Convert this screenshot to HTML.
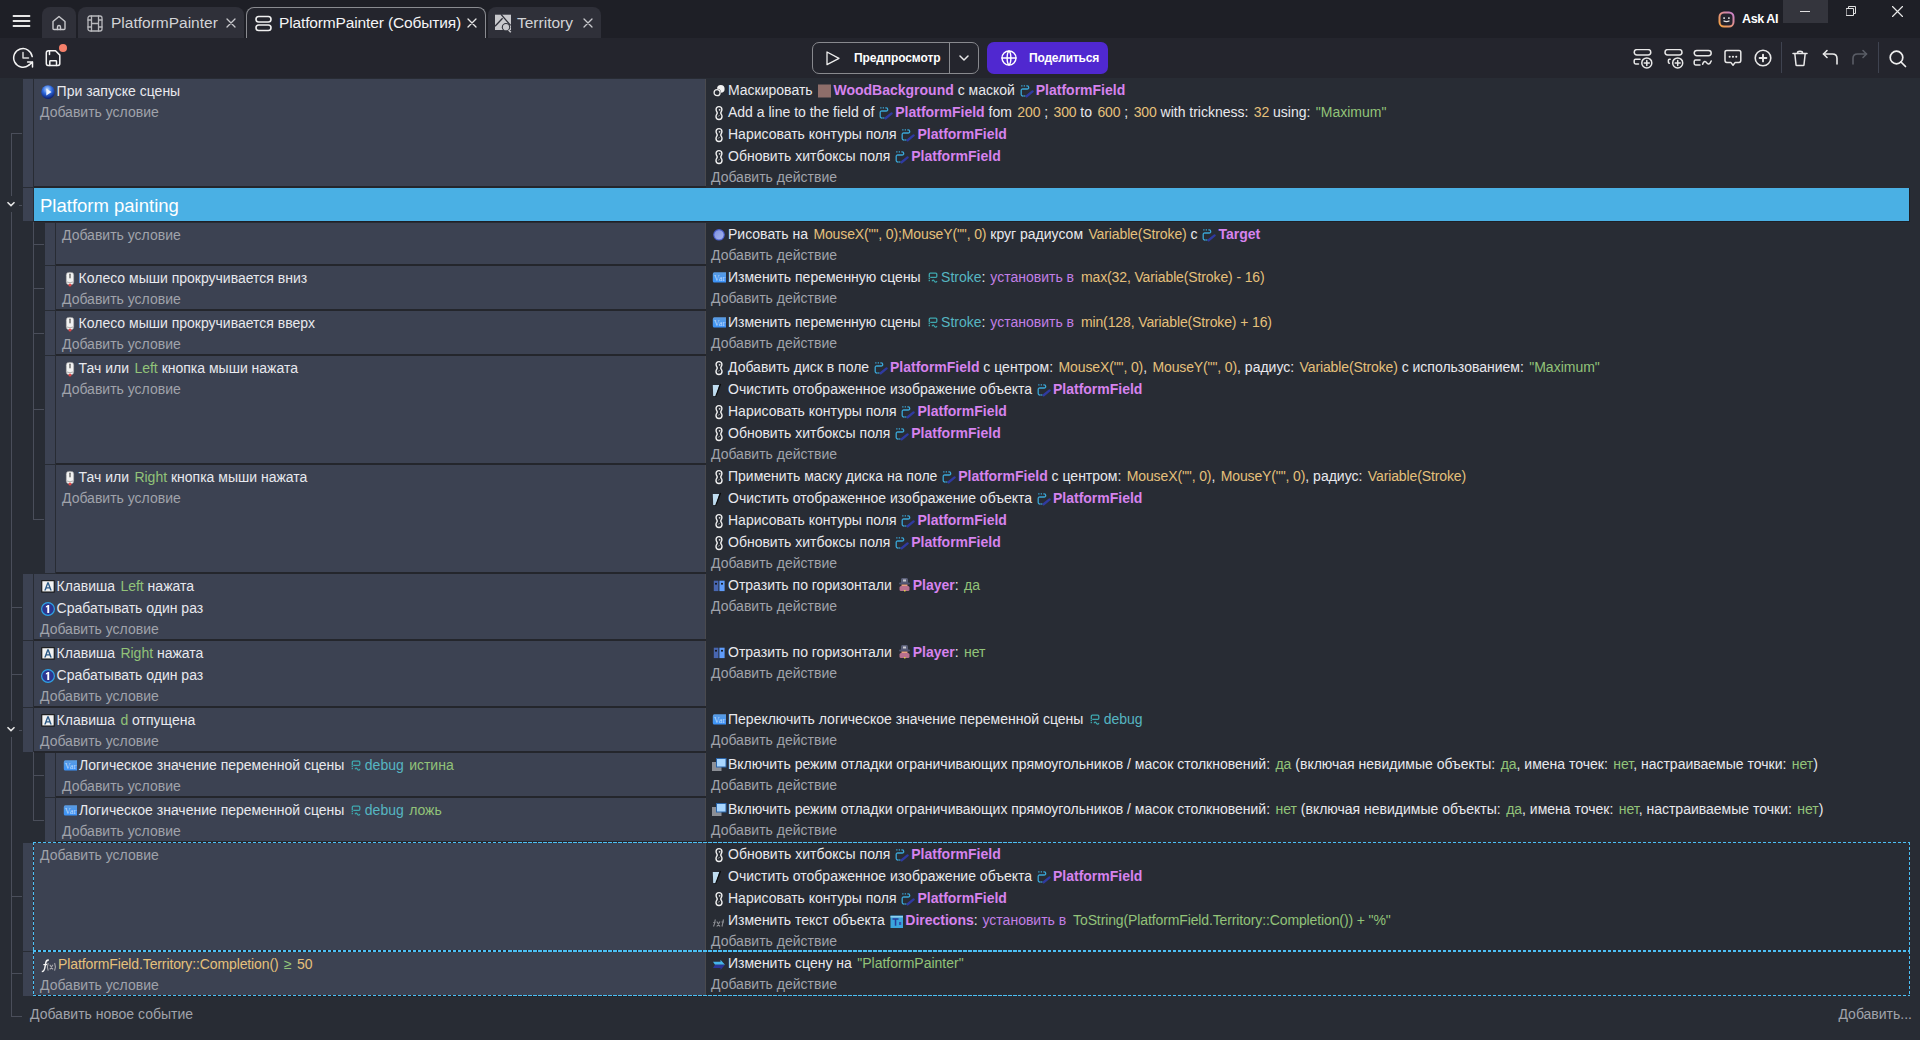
<!DOCTYPE html>
<html><head><meta charset="utf-8"><style>
*{box-sizing:border-box}
html,body{margin:0;padding:0}
body{width:1920px;height:1040px;overflow:hidden;position:relative;background:#282c34;font-family:"Liberation Sans",sans-serif;font-size:14px;color:#e8e9ee}
#tabbar{position:absolute;left:0;top:0;width:1920px;height:38px;background:#1e1f26}
#toolbar{position:absolute;left:0;top:38px;width:1920px;height:40px;background:#24252d}
.tab{position:absolute;top:7px;height:31px;background:#2f3039;border-radius:8px 8px 0 0}
.tab.act{background:#24252d;border:1px solid #8a8b90;border-bottom:none}
.tabt{position:absolute;top:13px;font-size:15.5px;line-height:20px;white-space:pre}
.btnt{position:absolute;font-weight:bold;font-size:12px;line-height:16px;color:#fff;white-space:pre}
.hd{position:absolute;width:10px;background:#3c4252}
.cd{position:absolute;background:#3c4252;border-right:1px solid #4a4a4e}
.sep{position:absolute;height:2px;background:#24262c}
.grp{position:absolute;background:#4ab0e4;border-right:1px solid #1e2026;border-bottom:1px solid #1e2026;color:#fff;font-size:18.5px}
.grp span{position:absolute;left:6px;top:8px;line-height:20px}
.ln{position:absolute;white-space:pre;line-height:22px;height:22px}
.i{display:inline-block;height:16px;vertical-align:-3px}
.ic{display:block;overflow:visible}
.tl{position:absolute;background:#4a4e5a}
.ex{color:#e5c07b;margin-left:1.5px;letter-spacing:-0.12px}
.gr{color:#92c379;margin-left:1.5px}
.gx{color:#92c379;margin-left:1.5px;letter-spacing:-0.12px}
.ob{color:#d683ee;font-weight:bold}
.vr{color:#56b6c2}
.op{color:#c27fe6;margin-left:1px;margin-right:1.5px}
.ad{color:#a0a3ab}
.dl{position:absolute}
.chev{position:absolute}
.dash{position:absolute;border:1px dashed #4cc0f5}
</style></head>
<body>
<div id="tabbar"></div><div id="toolbar"></div>
<svg style="position:absolute;left:12px;top:14px" width="20" height="14" viewBox="0 0 20 14" fill="none" stroke="#e6e6e6" stroke-width="1.8" stroke-linecap="round" stroke-linejoin="round"><path d="M1.5 2h16M1.5 7h16M1.5 12h16"/></svg>
<div class="tab" style="left:42px;width:34px"></div>
<svg style="position:absolute;left:50px;top:14px" width="18" height="18" viewBox="0 0 18 18" fill="none" stroke="#c8c8cc" stroke-width="1.4" stroke-linecap="round" stroke-linejoin="round"><path d="M3 7.5L9 2.5l6 5V14.5c0 .6-.4 1-1 1H4c-.6 0-1-.4-1-1z"/><path d="M7.5 15.5v-2.5a1.5 1.5 0 013 0v2.5"/></svg>
<div class="tab" style="left:78px;width:166px"></div>
<svg style="position:absolute;left:87px;top:15px" width="16" height="17" viewBox="0 0 16 17" fill="none" stroke="#b8b8bc" stroke-width="1.3" stroke-linecap="round" stroke-linejoin="round"><rect x="1" y="1" width="14" height="15" rx="2"/><path d="M4.5 1v15M11.5 1v15M4.5 8.5h7M1 5h3.5M1 12h3.5M11.5 5H15M11.5 12H15"/></svg>
<div class="tabt" style="left:111px;color:#d2d3d6">PlatformPainter</div>
<svg style="position:absolute;left:226px;top:18px" width="10" height="10" viewBox="0 0 10 10" fill="none" stroke="#c8c8cc" stroke-width="1.3" stroke-linecap="round" stroke-linejoin="round"><path d="M1 1l8 8M9 1L1 9"/></svg>
<div class="tab act" style="left:246px;width:240px"></div>
<svg style="position:absolute;left:255px;top:15px" width="17" height="17" viewBox="0 0 17 17" fill="none" stroke="#f0f0f0" stroke-width="1.6" stroke-linecap="round" stroke-linejoin="round"><rect x="1" y="1.5" width="15" height="5.5" rx="2.7"/><rect x="1" y="10" width="15" height="5.5" rx="2.7"/></svg>
<div class="tabt" style="left:279px;color:#f4f4f6;letter-spacing:-0.14px">PlatformPainter (События)</div>
<svg style="position:absolute;left:467px;top:18px" width="10" height="10" viewBox="0 0 10 10" fill="none" stroke="#e8e8e8" stroke-width="1.3" stroke-linecap="round" stroke-linejoin="round"><path d="M1 1l8 8M9 1L1 9"/></svg>
<div class="tab" style="left:488px;width:113px"></div>
<svg style="position:absolute;left:494px;top:14px" width="18" height="19" viewBox="0 0 18 19"><rect x="1" y="0.7" width="16" height="15.3" fill="#c8c8cc"/><path d="M1 12.3L8.6 4.2M7 0.4L16.6 11.4" stroke="#2f3039" stroke-width="1.3"/><circle cx="12" cy="13.2" r="4.2" fill="#2f3039"/><circle cx="12" cy="13.2" r="3.1" fill="#c8c8cc"/><path d="M14.6 16l2.2 2.2" stroke="#c8c8cc" stroke-width="1.6"/></svg>
<div class="tabt" style="left:517px;color:#d2d3d6">Territory</div>
<svg style="position:absolute;left:583px;top:18px" width="10" height="10" viewBox="0 0 10 10" fill="none" stroke="#c8c8cc" stroke-width="1.3" stroke-linecap="round" stroke-linejoin="round"><path d="M1 1l8 8M9 1L1 9"/></svg>
<svg style="position:absolute;left:1718px;top:11px" width="17" height="17" viewBox="0 0 17 17"><defs><linearGradient id="ga" x1="0" y1="1" x2="1" y2="0"><stop offset="0" stop-color="#f7a23a"/><stop offset="1" stop-color="#c77fd0"/></linearGradient></defs><rect x="1.5" y="1.5" width="14" height="14" rx="4.5" fill="#24232c" stroke="url(#ga)" stroke-width="2"/><rect x="5.3" y="6.3" width="1.6" height="1.6" fill="#e8e8e8"/><rect x="10.1" y="6.3" width="1.6" height="1.6" fill="#e8e8e8"/><path d="M5.5 9.8q3 1.8 6 0" stroke="#e8e8e8" stroke-width="1.2" fill="none"/></svg>
<div style="position:absolute;left:1742px;top:11px;font:bold 12.5px/16px 'Liberation Sans',sans-serif;letter-spacing:-0.4px;color:#fff">Ask AI</div>
<div style="position:absolute;left:1783px;top:0;width:45px;height:23px;background:#34353d"></div>
<svg style="position:absolute;left:1800px;top:11px" width="10" height="2" viewBox="0 0 10 2" fill="none" stroke="#e0e0e0" stroke-width="1" stroke-linecap="round" stroke-linejoin="round"><path d="M0 .5h10"/></svg>
<svg style="position:absolute;left:1846px;top:6px" width="10" height="10" viewBox="0 0 10 10" fill="none" stroke="#e0e0e0" stroke-width="1" stroke-linecap="round" stroke-linejoin="round"><path d="M2.5 2.5V.5h7v7h-2M.5 2.5h7v7h-7z"/></svg>
<svg style="position:absolute;left:1892px;top:6px" width="11" height="11" viewBox="0 0 11 11" fill="none" stroke="#e8e8e8" stroke-width="1.2" stroke-linecap="round" stroke-linejoin="round"><path d="M.5 .5l10 10M10.5 .5l-10 10"/></svg>
<svg style="position:absolute;left:12px;top:47px" width="22" height="22" viewBox="0 0 22 22" fill="none" stroke="#f4f4f4" stroke-width="1.5" stroke-linecap="round" stroke-linejoin="round"><path d="M20.2 9.6A9.3 9.3 0 1 0 16.6 18.3"/><path d="M15.6 15.1H20.5V20M16.6 18.3L20.5 15.1"/><path d="M11 5.5V11H16.5" stroke="#d8d8d8"/></svg>
<svg style="position:absolute;left:45px;top:50px" width="16" height="17" viewBox="0 0 16 17" fill="none" stroke="#f4f4f4" stroke-width="1.5" stroke-linecap="round" stroke-linejoin="round"><path d="M1.3 3Q1.3 .8 3.5 .8H10.5L14.8 5.1V13.6Q14.8 15.5 13 15.5H3Q1.3 15.5 1.3 13.6Z"/><path d="M4.5 .8V4.5"/><path d="M4.8 15.5V11.5Q4.8 10.8 5.5 10.8H10.8Q11.5 10.8 11.5 11.5V15.5"/></svg>
<div style="position:absolute;left:59px;top:44px;width:8px;height:8px;border-radius:50%;background:#f5806a"></div>
<div style="position:absolute;left:812px;top:42px;width:167px;height:32px;border:1px solid #88898e;border-radius:7px"></div>
<div style="position:absolute;left:949px;top:43px;width:1px;height:30px;background:#88898e"></div>
<svg style="position:absolute;left:826px;top:51px" width="15" height="15" viewBox="0 0 15 15" fill="none" stroke="#eeeeee" stroke-width="1.3" stroke-linecap="round" stroke-linejoin="round"><path d="M1 1l12 6.3L1 13.6z"/></svg>
<div class="btnt" style="left:854px;top:50px;letter-spacing:-0.1px">Предпросмотр</div>
<svg style="position:absolute;left:959px;top:55px" width="10" height="7" viewBox="0 0 10 7" fill="none" stroke="#e8e8e8" stroke-width="1.5" stroke-linecap="round" stroke-linejoin="round"><path d="M1 1l4 4 4-4"/></svg>
<div style="position:absolute;left:987px;top:42px;width:121px;height:32px;border-radius:7px;background:#5028d0"></div>
<svg style="position:absolute;left:1001px;top:50px" width="16" height="16" viewBox="0 0 16 16" fill="none" stroke="#ffffff" stroke-width="1.4" stroke-linecap="round" stroke-linejoin="round"><circle cx="8" cy="8" r="7"/><path d="M1 8h14M8 1c-2.5 2-2.5 12 0 14M8 1c2.5 2 2.5 12 0 14"/></svg>
<div class="btnt" style="left:1029px;top:50px;letter-spacing:-0.2px">Поделиться</div>
<svg style="position:absolute;left:1633px;top:49px" width="20" height="20" viewBox="0 0 20 20" fill="none" stroke="#e8e8e8" stroke-width="1.5" stroke-linecap="round" stroke-linejoin="round"><rect x="1.2" y="0.6" width="16.6" height="5.4" rx="2.7"/><path d="M7 10.2H2.6Q1.2 10.2 1.2 11.6V13.6Q1.2 15 2.6 15H5.5"/><circle cx="13.8" cy="13.9" r="5"/><path d="M13.8 11.4v5M11.3 13.9h5"/></svg>
<svg style="position:absolute;left:1664px;top:49px" width="20" height="20" viewBox="0 0 20 20" fill="none" stroke="#e8e8e8" stroke-width="1.5" stroke-linecap="round" stroke-linejoin="round"><rect x="1" y="0.6" width="17" height="5.4" rx="2.7"/><path d="M6.2 10.3H5.4Q4.4 10.3 4.4 11.3V13.3Q4.4 14.3 5.4 14.3"/><circle cx="13.7" cy="13.9" r="5"/><path d="M13.7 11.4v5M11.2 13.9h5"/></svg>
<svg style="position:absolute;left:1693px;top:49px" width="20" height="20" viewBox="0 0 20 20" fill="none" stroke="#e8e8e8" stroke-width="1.5" stroke-linecap="round" stroke-linejoin="round"><rect x="1.2" y="1.4" width="17" height="5.4" rx="2.7"/><path d="M7 11H2.6Q1.2 11 1.2 12.4V14.6Q1.2 16 2.6 16H7"/><path d="M9.6 15.2C10.6 11.8 12.6 11.8 13.6 13.6S16.8 16 18.2 12"/></svg>
<svg style="position:absolute;left:1724px;top:49px" width="18" height="18" viewBox="0 0 18 18" fill="none" stroke="#e8e8e8" stroke-width="1.5" stroke-linecap="round" stroke-linejoin="round"><path d="M2.8 1.4H15Q16.8 1.4 16.8 3.2V11.6Q16.8 13.4 15 13.4H11.2L9 16.2 6.8 13.4H2.8Q1 13.4 1 11.6V3.2Q1 1.4 2.8 1.4Z"/><path d="M5.6 7.8h.1M8.9 7.8h.1M12.2 7.8h.1" stroke-width="2"/></svg>
<svg style="position:absolute;left:1754px;top:49px" width="18" height="18" viewBox="0 0 18 18" fill="none" stroke="#e8e8e8" stroke-width="1.6" stroke-linecap="round" stroke-linejoin="round"><circle cx="9" cy="9" r="7.8"/><path d="M9 5.6v6.8M5.6 9h6.8" stroke-width="1.9"/></svg>
<div style="position:absolute;left:1781px;top:42px;width:1px;height:31px;background:#3f4350"></div>
<svg style="position:absolute;left:1792px;top:50px" width="16" height="17" viewBox="0 0 16 17" fill="none" stroke="#e8e8e8" stroke-width="1.5" stroke-linecap="round" stroke-linejoin="round"><path d="M1 3.5h14M5.5 3.5V2.8c0-1 .9-1.6 2.5-1.6s2.5.6 2.5 1.6v.7M2.8 3.5l1.2 11.2c0 .5.4.8.9.8h6.2c.5 0 .9-.3.9-.8l1.2-11.2"/></svg>
<svg style="position:absolute;left:1822px;top:49px" width="17" height="17" viewBox="0 0 17 17" fill="none" stroke="#e8e8e8" stroke-width="1.6" stroke-linecap="round" stroke-linejoin="round"><path d="M5 1.5L1.5 5 5 8.5"/><path d="M1.5 5h9c2.8 0 4.5 2 4.5 4.5V15"/></svg>
<svg style="position:absolute;left:1851px;top:49px" width="17" height="17" viewBox="0 0 17 17" fill="none" stroke="#5a5d66" stroke-width="1.6" stroke-linecap="round" stroke-linejoin="round"><path d="M12 1.5L15.5 5 12 8.5"/><path d="M15.5 5h-9C3.7 5 2 7 2 9.5V15"/></svg>
<div style="position:absolute;left:1878px;top:42px;width:1px;height:31px;background:#3f4350"></div>
<svg style="position:absolute;left:1889px;top:50px" width="18" height="18" viewBox="0 0 18 18" fill="none" stroke="#eeeeee" stroke-width="1.7" stroke-linecap="round" stroke-linejoin="round"><circle cx="7.5" cy="7.5" r="6.3"/><path d="M12 12l4.5 4.5"/></svg>
<div class="hd" style="left:23px;top:79px;height:108px"></div>
<div class="cd" style="left:34px;top:79px;width:672px;height:107px"></div>
<div class="sep" style="left:34px;top:186px;width:672px"></div>
<div class="ln" style="left:41px;top:80px"><span class="i" style="width:15.6px;margin-right:0px"><svg class="ic" width="15.6" height="16" viewBox="0 0 15.6 16" ><defs><radialGradient id="gp" cx="45%" cy="30%" r="75%"><stop offset="0" stop-color="#b8d8ff"/><stop offset="0.45" stop-color="#2f6ae0"/><stop offset="1" stop-color="#06125a"/></radialGradient></defs><circle cx="7" cy="9.1" r="6.8" fill="url(#gp)"/><path d="M5.3 5.6 L10.6 9.1 L5.3 12.6Z" fill="#eef2fa"/></svg></span>При запуске сцены</div>
<div class="ln" style="left:40px;top:101px"><span class="ad">Добавить условие</span></div>
<div class="ln" style="left:712px;top:79px"><span class="i" style="width:16px;margin-right:0px"><svg class="ic" width="16" height="16" viewBox="0 0 16 16" ><circle cx="8.8" cy="6.9" r="3.8" fill="#f4f4f4"/><circle cx="5.1" cy="10.7" r="3.9" fill="#282c34"/><circle cx="5.1" cy="10.7" r="3" fill="none" stroke="#eeeeee" stroke-width="1.3"/></svg></span>Маскировать <span class="i" style="width:13px;margin:0 2.5px 0 1.5px"><svg class="ic" width="13" height="16" viewBox="0 0 13 16" ><rect x="0" y="2.5" width="13" height="13" fill="#8e6e6a"/></svg></span><span class="ob">WoodBackground</span> с маской <span class="i" style="width:14px;margin:0 2px 0 1px"><svg class="ic" width="14" height="16" viewBox="0 0 14 16" ><path d="M1.2 3.9H6.5" fill="none" stroke="#3aa6d6" stroke-width="1.3" stroke-dasharray="1.3 1.2"/><path d="M6.5 3.9h.7Q8.7 3.9 8.7 5.4 8.7 7 7.2 7H2.7Q1.2 7 1.2 8.5V12.5Q1.2 14 2.7 14H3.6" fill="none" stroke="#3aa6d6" stroke-width="1.3"/><path d="M4.2 14h1.2" stroke="#3aa6d6" stroke-width="1.3"/><path d="M6.6 14.2L12.6 9.4" stroke="#2f3aa0" stroke-width="2.4" stroke-linecap="round"/></svg></span><span class="ob">PlatformField</span></div>
<div class="ln" style="left:712px;top:101px"><span class="i" style="width:16px;margin-right:0px"><svg class="ic" width="16" height="16" viewBox="0 0 16 16" ><path d="M7 2.6C5 2.6 4.1 3.9 4.1 5.6c0 1.3.6 2 1 2.8.2.4.2.8 0 1.2-.4.8-1.1 1.5-1.1 2.9 0 1.8 1 3 3 3s3-1.2 3-3c0-1.4-.7-2.1-1.1-2.9-.2-.4-.2-.8 0-1.2.4-.8 1-1.5 1-2.8 0-1.7-.9-3-2.9-3z" fill="none" stroke="#f0f0f0" stroke-width="1.4"/><circle cx="7.6" cy="5.8" r=".9" fill="#e0e0e0"/><path d="M6.2 12.6l1.4-1.6" stroke="#b0b0b0" stroke-width=".9"/></svg></span>Add a line to the field of <span class="i" style="width:14px;margin:0 2px 0 1px"><svg class="ic" width="14" height="16" viewBox="0 0 14 16" ><path d="M1.2 3.9H6.5" fill="none" stroke="#3aa6d6" stroke-width="1.3" stroke-dasharray="1.3 1.2"/><path d="M6.5 3.9h.7Q8.7 3.9 8.7 5.4 8.7 7 7.2 7H2.7Q1.2 7 1.2 8.5V12.5Q1.2 14 2.7 14H3.6" fill="none" stroke="#3aa6d6" stroke-width="1.3"/><path d="M4.2 14h1.2" stroke="#3aa6d6" stroke-width="1.3"/><path d="M6.6 14.2L12.6 9.4" stroke="#2f3aa0" stroke-width="2.4" stroke-linecap="round"/></svg></span><span class="ob">PlatformField</span> fom <span class="ex">200</span> ; <span class="ex">300</span> to <span class="ex">600</span> ; <span class="ex">300</span> with trickness: <span class="ex">32</span> using: <span class="gr">&quot;Maximum&quot;</span></div>
<div class="ln" style="left:712px;top:123px"><span class="i" style="width:16px;margin-right:0px"><svg class="ic" width="16" height="16" viewBox="0 0 16 16" ><path d="M7 2.6C5 2.6 4.1 3.9 4.1 5.6c0 1.3.6 2 1 2.8.2.4.2.8 0 1.2-.4.8-1.1 1.5-1.1 2.9 0 1.8 1 3 3 3s3-1.2 3-3c0-1.4-.7-2.1-1.1-2.9-.2-.4-.2-.8 0-1.2.4-.8 1-1.5 1-2.8 0-1.7-.9-3-2.9-3z" fill="none" stroke="#f0f0f0" stroke-width="1.4"/><circle cx="7.6" cy="5.8" r=".9" fill="#e0e0e0"/><path d="M6.2 12.6l1.4-1.6" stroke="#b0b0b0" stroke-width=".9"/></svg></span>Нарисовать контуры поля <span class="i" style="width:14px;margin:0 2px 0 1px"><svg class="ic" width="14" height="16" viewBox="0 0 14 16" ><path d="M1.2 3.9H6.5" fill="none" stroke="#3aa6d6" stroke-width="1.3" stroke-dasharray="1.3 1.2"/><path d="M6.5 3.9h.7Q8.7 3.9 8.7 5.4 8.7 7 7.2 7H2.7Q1.2 7 1.2 8.5V12.5Q1.2 14 2.7 14H3.6" fill="none" stroke="#3aa6d6" stroke-width="1.3"/><path d="M4.2 14h1.2" stroke="#3aa6d6" stroke-width="1.3"/><path d="M6.6 14.2L12.6 9.4" stroke="#2f3aa0" stroke-width="2.4" stroke-linecap="round"/></svg></span><span class="ob">PlatformField</span></div>
<div class="ln" style="left:712px;top:145px"><span class="i" style="width:16px;margin-right:0px"><svg class="ic" width="16" height="16" viewBox="0 0 16 16" ><path d="M7 2.6C5 2.6 4.1 3.9 4.1 5.6c0 1.3.6 2 1 2.8.2.4.2.8 0 1.2-.4.8-1.1 1.5-1.1 2.9 0 1.8 1 3 3 3s3-1.2 3-3c0-1.4-.7-2.1-1.1-2.9-.2-.4-.2-.8 0-1.2.4-.8 1-1.5 1-2.8 0-1.7-.9-3-2.9-3z" fill="none" stroke="#f0f0f0" stroke-width="1.4"/><circle cx="7.6" cy="5.8" r=".9" fill="#e0e0e0"/><path d="M6.2 12.6l1.4-1.6" stroke="#b0b0b0" stroke-width=".9"/></svg></span>Обновить хитбоксы поля <span class="i" style="width:14px;margin:0 2px 0 1px"><svg class="ic" width="14" height="16" viewBox="0 0 14 16" ><path d="M1.2 3.9H6.5" fill="none" stroke="#3aa6d6" stroke-width="1.3" stroke-dasharray="1.3 1.2"/><path d="M6.5 3.9h.7Q8.7 3.9 8.7 5.4 8.7 7 7.2 7H2.7Q1.2 7 1.2 8.5V12.5Q1.2 14 2.7 14H3.6" fill="none" stroke="#3aa6d6" stroke-width="1.3"/><path d="M4.2 14h1.2" stroke="#3aa6d6" stroke-width="1.3"/><path d="M6.6 14.2L12.6 9.4" stroke="#2f3aa0" stroke-width="2.4" stroke-linecap="round"/></svg></span><span class="ob">PlatformField</span></div>
<div class="ln" style="left:711px;top:166px"><span class="ad">Добавить действие</span></div>
<div class="hd" style="left:23px;top:188px;height:33px"></div>
<div class="grp" style="left:34px;top:188px;width:1876px;height:34px"><span>Platform painting</span></div>
<div class="hd" style="left:45px;top:223px;height:42px"></div>
<div class="cd" style="left:56px;top:223px;width:650px;height:41px"></div>
<div class="sep" style="left:56px;top:264px;width:650px"></div>
<div class="ln" style="left:62px;top:224px"><span class="ad">Добавить условие</span></div>
<div class="ln" style="left:712px;top:223px"><span class="i" style="width:16px;margin-right:0px"><svg class="ic" width="16" height="16" viewBox="0 0 16 16" ><defs><linearGradient id="gc" x1="0" y1="0" x2="1" y2="1"><stop offset="0" stop-color="#7d90e0"/><stop offset="1" stop-color="#a8b6ee"/></linearGradient></defs><circle cx="7" cy="8.85" r="5.2" fill="url(#gc)" stroke="#4d62d4" stroke-width="1.1"/></svg></span>Рисовать на <span class="ex">MouseX(&quot;&quot;, 0);MouseY(&quot;&quot;, 0)</span> круг радиусом <span class="ex">Variable(Stroke)</span> с <span class="i" style="width:14px;margin:0 2px 0 1px"><svg class="ic" width="14" height="16" viewBox="0 0 14 16" ><path d="M1.2 3.9H6.5" fill="none" stroke="#3aa6d6" stroke-width="1.3" stroke-dasharray="1.3 1.2"/><path d="M6.5 3.9h.7Q8.7 3.9 8.7 5.4 8.7 7 7.2 7H2.7Q1.2 7 1.2 8.5V12.5Q1.2 14 2.7 14H3.6" fill="none" stroke="#3aa6d6" stroke-width="1.3"/><path d="M4.2 14h1.2" stroke="#3aa6d6" stroke-width="1.3"/><path d="M6.6 14.2L12.6 9.4" stroke="#2f3aa0" stroke-width="2.4" stroke-linecap="round"/></svg></span><span class="ob">Target</span></div>
<div class="ln" style="left:711px;top:244px"><span class="ad">Добавить действие</span></div>
<div class="hd" style="left:45px;top:266px;height:44px"></div>
<div class="cd" style="left:56px;top:266px;width:650px;height:43px"></div>
<div class="sep" style="left:56px;top:309px;width:650px"></div>
<div class="ln" style="left:63px;top:267px"><span class="i" style="width:15.6px;margin-right:0px"><svg class="ic" width="15.6" height="16" viewBox="0 0 15.6 16" ><path d="M3.2 5.2C3.2 3 4.4 2.3 7 2.3s3.8.7 3.8 2.9v6.3c0 2.6-1.4 3.4-3.8 3.4s-3.8-.8-3.8-3.4z" fill="#f2f2f2" stroke="#888" stroke-width=".5"/><path d="M7 4.3v3.5" stroke="#666" stroke-width="1.4" stroke-linecap="round"/><path d="M4 12q3 1.5 6 0" stroke="#999" stroke-width=".8" fill="none"/><circle cx="7" cy="15" r="1.5" fill="#e04848"/></svg></span>Колесо мыши прокручивается вниз</div>
<div class="ln" style="left:62px;top:288px"><span class="ad">Добавить условие</span></div>
<div class="ln" style="left:712px;top:266px"><span class="i" style="width:16px;margin-right:0px"><svg class="ic" width="16" height="16" viewBox="0 0 16 16" ><defs><linearGradient id="gv" x1="0" y1="0" x2="0" y2="1"><stop offset="0" stop-color="#5b9be0"/><stop offset="1" stop-color="#3a92fa"/></linearGradient></defs><path d="M2.3 3.3H14V13.6H2.3Q.8 13.6 .8 12V5Q.8 3.3 2.3 3.3z" fill="url(#gv)"/><text x="7.5" y="12.2" font-family="Liberation Serif" font-size="8.2" fill="#bcd9ff" text-anchor="middle">Var</text></svg></span>Изменить переменную сцены <span class="i" style="width:10px;margin:0 3.5px 0 3px"><svg class="ic" width="10" height="16" viewBox="0 0 10 16" ><path d="M1.3 8.6V5.2Q1.3 4.2 2.3 4.2H7.8Q8.8 4.2 8.8 5.2V7.3Q8.8 8.3 7.8 8.3H2.3" fill="none" stroke="#3ea7ae" stroke-width="1.3"/><path d="M1.3 9v3.6" stroke="#3ea7ae" stroke-width="1.3" stroke-dasharray="1.2 .8"/><path d="M4 12.2q1.2-2 2.4 0t2.6 0" fill="none" stroke="#3ea7ae" stroke-width="1.2"/></svg></span><span class="vr">Stroke</span>: <span class="op">установить в</span> <span class="ex">max(32, Variable(Stroke) - 16)</span></div>
<div class="ln" style="left:711px;top:287px"><span class="ad">Добавить действие</span></div>
<div class="hd" style="left:45px;top:311px;height:44px"></div>
<div class="cd" style="left:56px;top:311px;width:650px;height:43px"></div>
<div class="sep" style="left:56px;top:354px;width:650px"></div>
<div class="ln" style="left:63px;top:312px"><span class="i" style="width:15.6px;margin-right:0px"><svg class="ic" width="15.6" height="16" viewBox="0 0 15.6 16" ><path d="M3.2 5.2C3.2 3 4.4 2.3 7 2.3s3.8.7 3.8 2.9v6.3c0 2.6-1.4 3.4-3.8 3.4s-3.8-.8-3.8-3.4z" fill="#f2f2f2" stroke="#888" stroke-width=".5"/><path d="M7 4.3v3.5" stroke="#666" stroke-width="1.4" stroke-linecap="round"/><path d="M4 12q3 1.5 6 0" stroke="#999" stroke-width=".8" fill="none"/><circle cx="7" cy="15" r="1.5" fill="#e04848"/></svg></span>Колесо мыши прокручивается вверх</div>
<div class="ln" style="left:62px;top:333px"><span class="ad">Добавить условие</span></div>
<div class="ln" style="left:712px;top:311px"><span class="i" style="width:16px;margin-right:0px"><svg class="ic" width="16" height="16" viewBox="0 0 16 16" ><defs><linearGradient id="gv" x1="0" y1="0" x2="0" y2="1"><stop offset="0" stop-color="#5b9be0"/><stop offset="1" stop-color="#3a92fa"/></linearGradient></defs><path d="M2.3 3.3H14V13.6H2.3Q.8 13.6 .8 12V5Q.8 3.3 2.3 3.3z" fill="url(#gv)"/><text x="7.5" y="12.2" font-family="Liberation Serif" font-size="8.2" fill="#bcd9ff" text-anchor="middle">Var</text></svg></span>Изменить переменную сцены <span class="i" style="width:10px;margin:0 3.5px 0 3px"><svg class="ic" width="10" height="16" viewBox="0 0 10 16" ><path d="M1.3 8.6V5.2Q1.3 4.2 2.3 4.2H7.8Q8.8 4.2 8.8 5.2V7.3Q8.8 8.3 7.8 8.3H2.3" fill="none" stroke="#3ea7ae" stroke-width="1.3"/><path d="M1.3 9v3.6" stroke="#3ea7ae" stroke-width="1.3" stroke-dasharray="1.2 .8"/><path d="M4 12.2q1.2-2 2.4 0t2.6 0" fill="none" stroke="#3ea7ae" stroke-width="1.2"/></svg></span><span class="vr">Stroke</span>: <span class="op">установить в</span> <span class="ex">min(128, Variable(Stroke) + 16)</span></div>
<div class="ln" style="left:711px;top:332px"><span class="ad">Добавить действие</span></div>
<div class="hd" style="left:45px;top:356px;height:108px"></div>
<div class="cd" style="left:56px;top:356px;width:650px;height:107px"></div>
<div class="sep" style="left:56px;top:463px;width:650px"></div>
<div class="ln" style="left:63px;top:357px"><span class="i" style="width:15.6px;margin-right:0px"><svg class="ic" width="15.6" height="16" viewBox="0 0 15.6 16" ><path d="M3.2 5.2C3.2 3 4.4 2.3 7 2.3s3.8.7 3.8 2.9v6.3c0 2.6-1.4 3.4-3.8 3.4s-3.8-.8-3.8-3.4z" fill="#f2f2f2" stroke="#888" stroke-width=".5"/><path d="M7 4.3v3.5" stroke="#666" stroke-width="1.4" stroke-linecap="round"/><path d="M4 12q3 1.5 6 0" stroke="#999" stroke-width=".8" fill="none"/><circle cx="7" cy="15" r="1.5" fill="#e04848"/></svg></span>Тач или <span class="gr">Left</span> кнопка мыши нажата</div>
<div class="ln" style="left:62px;top:378px"><span class="ad">Добавить условие</span></div>
<div class="ln" style="left:712px;top:356px"><span class="i" style="width:16px;margin-right:0px"><svg class="ic" width="16" height="16" viewBox="0 0 16 16" ><path d="M7 2.6C5 2.6 4.1 3.9 4.1 5.6c0 1.3.6 2 1 2.8.2.4.2.8 0 1.2-.4.8-1.1 1.5-1.1 2.9 0 1.8 1 3 3 3s3-1.2 3-3c0-1.4-.7-2.1-1.1-2.9-.2-.4-.2-.8 0-1.2.4-.8 1-1.5 1-2.8 0-1.7-.9-3-2.9-3z" fill="none" stroke="#f0f0f0" stroke-width="1.4"/><circle cx="7.6" cy="5.8" r=".9" fill="#e0e0e0"/><path d="M6.2 12.6l1.4-1.6" stroke="#b0b0b0" stroke-width=".9"/></svg></span>Добавить диск в поле <span class="i" style="width:14px;margin:0 2px 0 1px"><svg class="ic" width="14" height="16" viewBox="0 0 14 16" ><path d="M1.2 3.9H6.5" fill="none" stroke="#3aa6d6" stroke-width="1.3" stroke-dasharray="1.3 1.2"/><path d="M6.5 3.9h.7Q8.7 3.9 8.7 5.4 8.7 7 7.2 7H2.7Q1.2 7 1.2 8.5V12.5Q1.2 14 2.7 14H3.6" fill="none" stroke="#3aa6d6" stroke-width="1.3"/><path d="M4.2 14h1.2" stroke="#3aa6d6" stroke-width="1.3"/><path d="M6.6 14.2L12.6 9.4" stroke="#2f3aa0" stroke-width="2.4" stroke-linecap="round"/></svg></span><span class="ob">PlatformField</span> с центром: <span class="ex">MouseX(&quot;&quot;, 0)</span>, <span class="ex">MouseY(&quot;&quot;, 0)</span>, радиус: <span class="ex">Variable(Stroke)</span> с использованием: <span class="gr">&quot;Maximum&quot;</span></div>
<div class="ln" style="left:712px;top:378px"><span class="i" style="width:16px;margin-right:0px"><svg class="ic" width="16" height="16" viewBox="0 0 16 16" ><path d="M.8 4h6.4L4 15H1.2z" fill="#bfdcf0"/><path d="M8.6 3L3.6 15.6" stroke="#0a0a0a" stroke-width="1.2"/></svg></span>Очистить отображенное изображение объекта <span class="i" style="width:14px;margin:0 2px 0 1px"><svg class="ic" width="14" height="16" viewBox="0 0 14 16" ><path d="M1.2 3.9H6.5" fill="none" stroke="#3aa6d6" stroke-width="1.3" stroke-dasharray="1.3 1.2"/><path d="M6.5 3.9h.7Q8.7 3.9 8.7 5.4 8.7 7 7.2 7H2.7Q1.2 7 1.2 8.5V12.5Q1.2 14 2.7 14H3.6" fill="none" stroke="#3aa6d6" stroke-width="1.3"/><path d="M4.2 14h1.2" stroke="#3aa6d6" stroke-width="1.3"/><path d="M6.6 14.2L12.6 9.4" stroke="#2f3aa0" stroke-width="2.4" stroke-linecap="round"/></svg></span><span class="ob">PlatformField</span></div>
<div class="ln" style="left:712px;top:400px"><span class="i" style="width:16px;margin-right:0px"><svg class="ic" width="16" height="16" viewBox="0 0 16 16" ><path d="M7 2.6C5 2.6 4.1 3.9 4.1 5.6c0 1.3.6 2 1 2.8.2.4.2.8 0 1.2-.4.8-1.1 1.5-1.1 2.9 0 1.8 1 3 3 3s3-1.2 3-3c0-1.4-.7-2.1-1.1-2.9-.2-.4-.2-.8 0-1.2.4-.8 1-1.5 1-2.8 0-1.7-.9-3-2.9-3z" fill="none" stroke="#f0f0f0" stroke-width="1.4"/><circle cx="7.6" cy="5.8" r=".9" fill="#e0e0e0"/><path d="M6.2 12.6l1.4-1.6" stroke="#b0b0b0" stroke-width=".9"/></svg></span>Нарисовать контуры поля <span class="i" style="width:14px;margin:0 2px 0 1px"><svg class="ic" width="14" height="16" viewBox="0 0 14 16" ><path d="M1.2 3.9H6.5" fill="none" stroke="#3aa6d6" stroke-width="1.3" stroke-dasharray="1.3 1.2"/><path d="M6.5 3.9h.7Q8.7 3.9 8.7 5.4 8.7 7 7.2 7H2.7Q1.2 7 1.2 8.5V12.5Q1.2 14 2.7 14H3.6" fill="none" stroke="#3aa6d6" stroke-width="1.3"/><path d="M4.2 14h1.2" stroke="#3aa6d6" stroke-width="1.3"/><path d="M6.6 14.2L12.6 9.4" stroke="#2f3aa0" stroke-width="2.4" stroke-linecap="round"/></svg></span><span class="ob">PlatformField</span></div>
<div class="ln" style="left:712px;top:422px"><span class="i" style="width:16px;margin-right:0px"><svg class="ic" width="16" height="16" viewBox="0 0 16 16" ><path d="M7 2.6C5 2.6 4.1 3.9 4.1 5.6c0 1.3.6 2 1 2.8.2.4.2.8 0 1.2-.4.8-1.1 1.5-1.1 2.9 0 1.8 1 3 3 3s3-1.2 3-3c0-1.4-.7-2.1-1.1-2.9-.2-.4-.2-.8 0-1.2.4-.8 1-1.5 1-2.8 0-1.7-.9-3-2.9-3z" fill="none" stroke="#f0f0f0" stroke-width="1.4"/><circle cx="7.6" cy="5.8" r=".9" fill="#e0e0e0"/><path d="M6.2 12.6l1.4-1.6" stroke="#b0b0b0" stroke-width=".9"/></svg></span>Обновить хитбоксы поля <span class="i" style="width:14px;margin:0 2px 0 1px"><svg class="ic" width="14" height="16" viewBox="0 0 14 16" ><path d="M1.2 3.9H6.5" fill="none" stroke="#3aa6d6" stroke-width="1.3" stroke-dasharray="1.3 1.2"/><path d="M6.5 3.9h.7Q8.7 3.9 8.7 5.4 8.7 7 7.2 7H2.7Q1.2 7 1.2 8.5V12.5Q1.2 14 2.7 14H3.6" fill="none" stroke="#3aa6d6" stroke-width="1.3"/><path d="M4.2 14h1.2" stroke="#3aa6d6" stroke-width="1.3"/><path d="M6.6 14.2L12.6 9.4" stroke="#2f3aa0" stroke-width="2.4" stroke-linecap="round"/></svg></span><span class="ob">PlatformField</span></div>
<div class="ln" style="left:711px;top:443px"><span class="ad">Добавить действие</span></div>
<div class="hd" style="left:45px;top:465px;height:108px"></div>
<div class="cd" style="left:56px;top:465px;width:650px;height:107px"></div>
<div class="sep" style="left:56px;top:572px;width:650px"></div>
<div class="ln" style="left:63px;top:466px"><span class="i" style="width:15.6px;margin-right:0px"><svg class="ic" width="15.6" height="16" viewBox="0 0 15.6 16" ><path d="M3.2 5.2C3.2 3 4.4 2.3 7 2.3s3.8.7 3.8 2.9v6.3c0 2.6-1.4 3.4-3.8 3.4s-3.8-.8-3.8-3.4z" fill="#f2f2f2" stroke="#888" stroke-width=".5"/><path d="M7 4.3v3.5" stroke="#666" stroke-width="1.4" stroke-linecap="round"/><path d="M4 12q3 1.5 6 0" stroke="#999" stroke-width=".8" fill="none"/><circle cx="7" cy="15" r="1.5" fill="#e04848"/></svg></span>Тач или <span class="gr">Right</span> кнопка мыши нажата</div>
<div class="ln" style="left:62px;top:487px"><span class="ad">Добавить условие</span></div>
<div class="ln" style="left:712px;top:465px"><span class="i" style="width:16px;margin-right:0px"><svg class="ic" width="16" height="16" viewBox="0 0 16 16" ><path d="M7 2.6C5 2.6 4.1 3.9 4.1 5.6c0 1.3.6 2 1 2.8.2.4.2.8 0 1.2-.4.8-1.1 1.5-1.1 2.9 0 1.8 1 3 3 3s3-1.2 3-3c0-1.4-.7-2.1-1.1-2.9-.2-.4-.2-.8 0-1.2.4-.8 1-1.5 1-2.8 0-1.7-.9-3-2.9-3z" fill="none" stroke="#f0f0f0" stroke-width="1.4"/><circle cx="7.6" cy="5.8" r=".9" fill="#e0e0e0"/><path d="M6.2 12.6l1.4-1.6" stroke="#b0b0b0" stroke-width=".9"/></svg></span>Применить маску диска на поле <span class="i" style="width:14px;margin:0 2px 0 1px"><svg class="ic" width="14" height="16" viewBox="0 0 14 16" ><path d="M1.2 3.9H6.5" fill="none" stroke="#3aa6d6" stroke-width="1.3" stroke-dasharray="1.3 1.2"/><path d="M6.5 3.9h.7Q8.7 3.9 8.7 5.4 8.7 7 7.2 7H2.7Q1.2 7 1.2 8.5V12.5Q1.2 14 2.7 14H3.6" fill="none" stroke="#3aa6d6" stroke-width="1.3"/><path d="M4.2 14h1.2" stroke="#3aa6d6" stroke-width="1.3"/><path d="M6.6 14.2L12.6 9.4" stroke="#2f3aa0" stroke-width="2.4" stroke-linecap="round"/></svg></span><span class="ob">PlatformField</span> с центром: <span class="ex">MouseX(&quot;&quot;, 0)</span>, <span class="ex">MouseY(&quot;&quot;, 0)</span>, радиус: <span class="ex">Variable(Stroke)</span></div>
<div class="ln" style="left:712px;top:487px"><span class="i" style="width:16px;margin-right:0px"><svg class="ic" width="16" height="16" viewBox="0 0 16 16" ><path d="M.8 4h6.4L4 15H1.2z" fill="#bfdcf0"/><path d="M8.6 3L3.6 15.6" stroke="#0a0a0a" stroke-width="1.2"/></svg></span>Очистить отображенное изображение объекта <span class="i" style="width:14px;margin:0 2px 0 1px"><svg class="ic" width="14" height="16" viewBox="0 0 14 16" ><path d="M1.2 3.9H6.5" fill="none" stroke="#3aa6d6" stroke-width="1.3" stroke-dasharray="1.3 1.2"/><path d="M6.5 3.9h.7Q8.7 3.9 8.7 5.4 8.7 7 7.2 7H2.7Q1.2 7 1.2 8.5V12.5Q1.2 14 2.7 14H3.6" fill="none" stroke="#3aa6d6" stroke-width="1.3"/><path d="M4.2 14h1.2" stroke="#3aa6d6" stroke-width="1.3"/><path d="M6.6 14.2L12.6 9.4" stroke="#2f3aa0" stroke-width="2.4" stroke-linecap="round"/></svg></span><span class="ob">PlatformField</span></div>
<div class="ln" style="left:712px;top:509px"><span class="i" style="width:16px;margin-right:0px"><svg class="ic" width="16" height="16" viewBox="0 0 16 16" ><path d="M7 2.6C5 2.6 4.1 3.9 4.1 5.6c0 1.3.6 2 1 2.8.2.4.2.8 0 1.2-.4.8-1.1 1.5-1.1 2.9 0 1.8 1 3 3 3s3-1.2 3-3c0-1.4-.7-2.1-1.1-2.9-.2-.4-.2-.8 0-1.2.4-.8 1-1.5 1-2.8 0-1.7-.9-3-2.9-3z" fill="none" stroke="#f0f0f0" stroke-width="1.4"/><circle cx="7.6" cy="5.8" r=".9" fill="#e0e0e0"/><path d="M6.2 12.6l1.4-1.6" stroke="#b0b0b0" stroke-width=".9"/></svg></span>Нарисовать контуры поля <span class="i" style="width:14px;margin:0 2px 0 1px"><svg class="ic" width="14" height="16" viewBox="0 0 14 16" ><path d="M1.2 3.9H6.5" fill="none" stroke="#3aa6d6" stroke-width="1.3" stroke-dasharray="1.3 1.2"/><path d="M6.5 3.9h.7Q8.7 3.9 8.7 5.4 8.7 7 7.2 7H2.7Q1.2 7 1.2 8.5V12.5Q1.2 14 2.7 14H3.6" fill="none" stroke="#3aa6d6" stroke-width="1.3"/><path d="M4.2 14h1.2" stroke="#3aa6d6" stroke-width="1.3"/><path d="M6.6 14.2L12.6 9.4" stroke="#2f3aa0" stroke-width="2.4" stroke-linecap="round"/></svg></span><span class="ob">PlatformField</span></div>
<div class="ln" style="left:712px;top:531px"><span class="i" style="width:16px;margin-right:0px"><svg class="ic" width="16" height="16" viewBox="0 0 16 16" ><path d="M7 2.6C5 2.6 4.1 3.9 4.1 5.6c0 1.3.6 2 1 2.8.2.4.2.8 0 1.2-.4.8-1.1 1.5-1.1 2.9 0 1.8 1 3 3 3s3-1.2 3-3c0-1.4-.7-2.1-1.1-2.9-.2-.4-.2-.8 0-1.2.4-.8 1-1.5 1-2.8 0-1.7-.9-3-2.9-3z" fill="none" stroke="#f0f0f0" stroke-width="1.4"/><circle cx="7.6" cy="5.8" r=".9" fill="#e0e0e0"/><path d="M6.2 12.6l1.4-1.6" stroke="#b0b0b0" stroke-width=".9"/></svg></span>Обновить хитбоксы поля <span class="i" style="width:14px;margin:0 2px 0 1px"><svg class="ic" width="14" height="16" viewBox="0 0 14 16" ><path d="M1.2 3.9H6.5" fill="none" stroke="#3aa6d6" stroke-width="1.3" stroke-dasharray="1.3 1.2"/><path d="M6.5 3.9h.7Q8.7 3.9 8.7 5.4 8.7 7 7.2 7H2.7Q1.2 7 1.2 8.5V12.5Q1.2 14 2.7 14H3.6" fill="none" stroke="#3aa6d6" stroke-width="1.3"/><path d="M4.2 14h1.2" stroke="#3aa6d6" stroke-width="1.3"/><path d="M6.6 14.2L12.6 9.4" stroke="#2f3aa0" stroke-width="2.4" stroke-linecap="round"/></svg></span><span class="ob">PlatformField</span></div>
<div class="ln" style="left:711px;top:552px"><span class="ad">Добавить действие</span></div>
<div class="hd" style="left:23px;top:574px;height:66px"></div>
<div class="cd" style="left:34px;top:574px;width:672px;height:65px"></div>
<div class="sep" style="left:34px;top:639px;width:672px"></div>
<div class="ln" style="left:41px;top:575px"><span class="i" style="width:15.6px;margin-right:0px"><svg class="ic" width="15.6" height="16" viewBox="0 0 15.6 16" ><rect x="0.8" y="2.7" width="12.4" height="11.3" fill="#f2f2f2" stroke="#0a0a0a" stroke-width="1"/><path d="M3.2 12.6L6.3 4.3h1.4l3.1 8.3H9.2l-.7-2H5.5l-.7 2zM5.9 9.3h2.2L7 6.2z" fill="#2d5a86"/></svg></span>Клавиша <span class="gr">Left</span> нажата</div>
<div class="ln" style="left:41px;top:597px"><span class="i" style="width:15.6px;margin-right:0px"><svg class="ic" width="15.6" height="16" viewBox="0 0 15.6 16" ><circle cx="7" cy="9" r="6.4" fill="#2c3690" stroke="#2fa2e2" stroke-width="1.2"/><path d="M6.3 13V6.8L4.9 7.8V6.3L7 4.9h1.2V13z" fill="#fff"/></svg></span>Срабатывать один раз</div>
<div class="ln" style="left:40px;top:618px"><span class="ad">Добавить условие</span></div>
<div class="ln" style="left:712px;top:574px"><span class="i" style="width:16px;margin-right:0px"><svg class="ic" width="16" height="16" viewBox="0 0 16 16" ><rect x="1.8" y="3.7" width="4.6" height="10.4" fill="#4866b0"/><rect x="7.4" y="3.7" width="5.2" height="10.4" fill="#5f9cfa"/><circle cx="4" cy="6.8" r="1" fill="#111"/><circle cx="10" cy="6.8" r="1" fill="#111"/></svg></span>Отразить по горизонтали <span class="i" style="width:13px;margin:0 2px 0 2px"><svg class="ic" width="13" height="16" viewBox="0 0 13 16" ><rect x="3" y="1" width="7" height="6" rx="1.5" fill="#5a5f78"/><rect x="5" y="2.5" width="3" height="2" fill="#c8c8d0"/><rect x="1" y="5.5" width="11" height="2" rx="1" fill="#4e5370"/><rect x="3.5" y="7.5" width="6" height="2" fill="#e8a080"/><rect x="1.5" y="9" width="10" height="5" rx="1.5" fill="#b8708e"/><rect x="6" y="13" width="1.5" height="1.5" fill="#e0d040"/></svg></span><span class="ob">Player</span>: <span class="gr">да</span></div>
<div class="ln" style="left:711px;top:595px"><span class="ad">Добавить действие</span></div>
<div class="hd" style="left:23px;top:641px;height:66px"></div>
<div class="cd" style="left:34px;top:641px;width:672px;height:65px"></div>
<div class="sep" style="left:34px;top:706px;width:672px"></div>
<div class="ln" style="left:41px;top:642px"><span class="i" style="width:15.6px;margin-right:0px"><svg class="ic" width="15.6" height="16" viewBox="0 0 15.6 16" ><rect x="0.8" y="2.7" width="12.4" height="11.3" fill="#f2f2f2" stroke="#0a0a0a" stroke-width="1"/><path d="M3.2 12.6L6.3 4.3h1.4l3.1 8.3H9.2l-.7-2H5.5l-.7 2zM5.9 9.3h2.2L7 6.2z" fill="#2d5a86"/></svg></span>Клавиша <span class="gr">Right</span> нажата</div>
<div class="ln" style="left:41px;top:664px"><span class="i" style="width:15.6px;margin-right:0px"><svg class="ic" width="15.6" height="16" viewBox="0 0 15.6 16" ><circle cx="7" cy="9" r="6.4" fill="#2c3690" stroke="#2fa2e2" stroke-width="1.2"/><path d="M6.3 13V6.8L4.9 7.8V6.3L7 4.9h1.2V13z" fill="#fff"/></svg></span>Срабатывать один раз</div>
<div class="ln" style="left:40px;top:685px"><span class="ad">Добавить условие</span></div>
<div class="ln" style="left:712px;top:641px"><span class="i" style="width:16px;margin-right:0px"><svg class="ic" width="16" height="16" viewBox="0 0 16 16" ><rect x="1.8" y="3.7" width="4.6" height="10.4" fill="#4866b0"/><rect x="7.4" y="3.7" width="5.2" height="10.4" fill="#5f9cfa"/><circle cx="4" cy="6.8" r="1" fill="#111"/><circle cx="10" cy="6.8" r="1" fill="#111"/></svg></span>Отразить по горизонтали <span class="i" style="width:13px;margin:0 2px 0 2px"><svg class="ic" width="13" height="16" viewBox="0 0 13 16" ><rect x="3" y="1" width="7" height="6" rx="1.5" fill="#5a5f78"/><rect x="5" y="2.5" width="3" height="2" fill="#c8c8d0"/><rect x="1" y="5.5" width="11" height="2" rx="1" fill="#4e5370"/><rect x="3.5" y="7.5" width="6" height="2" fill="#e8a080"/><rect x="1.5" y="9" width="10" height="5" rx="1.5" fill="#b8708e"/><rect x="6" y="13" width="1.5" height="1.5" fill="#e0d040"/></svg></span><span class="ob">Player</span>: <span class="gr">нет</span></div>
<div class="ln" style="left:711px;top:662px"><span class="ad">Добавить действие</span></div>
<div class="hd" style="left:23px;top:708px;height:44px"></div>
<div class="cd" style="left:34px;top:708px;width:672px;height:43px"></div>
<div class="sep" style="left:34px;top:751px;width:672px"></div>
<div class="ln" style="left:41px;top:709px"><span class="i" style="width:15.6px;margin-right:0px"><svg class="ic" width="15.6" height="16" viewBox="0 0 15.6 16" ><rect x="0.8" y="2.7" width="12.4" height="11.3" fill="#f2f2f2" stroke="#0a0a0a" stroke-width="1"/><path d="M3.2 12.6L6.3 4.3h1.4l3.1 8.3H9.2l-.7-2H5.5l-.7 2zM5.9 9.3h2.2L7 6.2z" fill="#2d5a86"/></svg></span>Клавиша <span class="gr">d</span> отпущена</div>
<div class="ln" style="left:40px;top:730px"><span class="ad">Добавить условие</span></div>
<div class="ln" style="left:712px;top:708px"><span class="i" style="width:16px;margin-right:0px"><svg class="ic" width="16" height="16" viewBox="0 0 16 16" ><defs><linearGradient id="gv" x1="0" y1="0" x2="0" y2="1"><stop offset="0" stop-color="#5b9be0"/><stop offset="1" stop-color="#3a92fa"/></linearGradient></defs><path d="M2.3 3.3H14V13.6H2.3Q.8 13.6 .8 12V5Q.8 3.3 2.3 3.3z" fill="url(#gv)"/><text x="7.5" y="12.2" font-family="Liberation Serif" font-size="8.2" fill="#bcd9ff" text-anchor="middle">Var</text></svg></span>Переключить логическое значение переменной сцены <span class="i" style="width:10px;margin:0 3.5px 0 3px"><svg class="ic" width="10" height="16" viewBox="0 0 10 16" ><path d="M1.3 8.6V5.2Q1.3 4.2 2.3 4.2H7.8Q8.8 4.2 8.8 5.2V7.3Q8.8 8.3 7.8 8.3H2.3" fill="none" stroke="#3ea7ae" stroke-width="1.3"/><path d="M1.3 9v3.6" stroke="#3ea7ae" stroke-width="1.3" stroke-dasharray="1.2 .8"/><path d="M4 12.2q1.2-2 2.4 0t2.6 0" fill="none" stroke="#3ea7ae" stroke-width="1.2"/></svg></span><span class="vr">debug</span></div>
<div class="ln" style="left:711px;top:729px"><span class="ad">Добавить действие</span></div>
<div class="hd" style="left:45px;top:753px;height:44px"></div>
<div class="cd" style="left:56px;top:753px;width:650px;height:43px"></div>
<div class="sep" style="left:56px;top:796px;width:650px"></div>
<div class="ln" style="left:63px;top:754px"><span class="i" style="width:16px;margin-right:0px"><svg class="ic" width="16" height="16" viewBox="0 0 16 16" ><defs><linearGradient id="gv" x1="0" y1="0" x2="0" y2="1"><stop offset="0" stop-color="#5b9be0"/><stop offset="1" stop-color="#3a92fa"/></linearGradient></defs><path d="M2.3 3.3H14V13.6H2.3Q.8 13.6 .8 12V5Q.8 3.3 2.3 3.3z" fill="url(#gv)"/><text x="7.5" y="12.2" font-family="Liberation Serif" font-size="8.2" fill="#bcd9ff" text-anchor="middle">Var</text></svg></span>Логическое значение переменной сцены <span class="i" style="width:10px;margin:0 3.5px 0 3px"><svg class="ic" width="10" height="16" viewBox="0 0 10 16" ><path d="M1.3 8.6V5.2Q1.3 4.2 2.3 4.2H7.8Q8.8 4.2 8.8 5.2V7.3Q8.8 8.3 7.8 8.3H2.3" fill="none" stroke="#3ea7ae" stroke-width="1.3"/><path d="M1.3 9v3.6" stroke="#3ea7ae" stroke-width="1.3" stroke-dasharray="1.2 .8"/><path d="M4 12.2q1.2-2 2.4 0t2.6 0" fill="none" stroke="#3ea7ae" stroke-width="1.2"/></svg></span><span class="vr">debug</span> <span class="gr">истина</span></div>
<div class="ln" style="left:62px;top:775px"><span class="ad">Добавить условие</span></div>
<div class="ln" style="left:712px;top:753px"><span class="i" style="width:16px;margin-right:0px"><svg class="ic" width="16" height="16" viewBox="0 0 16 16" ><rect x="0" y="6" width="9.5" height="9" fill="#8c8f96"/><rect x="4.5" y="2.5" width="9.5" height="8.5" fill="#a8d6ff" stroke="#2a64a8" stroke-width="1"/></svg></span>Включить режим отладки ограничивающих прямоугольников / масок столкновений: <span class="gr">да</span> (включая невидимые объекты: <span class="gr">да</span>, имена точек: <span class="gr">нет</span>, настраиваемые точки: <span class="gr">нет</span>)</div>
<div class="ln" style="left:711px;top:774px"><span class="ad">Добавить действие</span></div>
<div class="hd" style="left:45px;top:798px;height:44px"></div>
<div class="cd" style="left:56px;top:798px;width:650px;height:43px"></div>
<div class="sep" style="left:56px;top:841px;width:650px"></div>
<div class="ln" style="left:63px;top:799px"><span class="i" style="width:16px;margin-right:0px"><svg class="ic" width="16" height="16" viewBox="0 0 16 16" ><defs><linearGradient id="gv" x1="0" y1="0" x2="0" y2="1"><stop offset="0" stop-color="#5b9be0"/><stop offset="1" stop-color="#3a92fa"/></linearGradient></defs><path d="M2.3 3.3H14V13.6H2.3Q.8 13.6 .8 12V5Q.8 3.3 2.3 3.3z" fill="url(#gv)"/><text x="7.5" y="12.2" font-family="Liberation Serif" font-size="8.2" fill="#bcd9ff" text-anchor="middle">Var</text></svg></span>Логическое значение переменной сцены <span class="i" style="width:10px;margin:0 3.5px 0 3px"><svg class="ic" width="10" height="16" viewBox="0 0 10 16" ><path d="M1.3 8.6V5.2Q1.3 4.2 2.3 4.2H7.8Q8.8 4.2 8.8 5.2V7.3Q8.8 8.3 7.8 8.3H2.3" fill="none" stroke="#3ea7ae" stroke-width="1.3"/><path d="M1.3 9v3.6" stroke="#3ea7ae" stroke-width="1.3" stroke-dasharray="1.2 .8"/><path d="M4 12.2q1.2-2 2.4 0t2.6 0" fill="none" stroke="#3ea7ae" stroke-width="1.2"/></svg></span><span class="vr">debug</span> <span class="gr">ложь</span></div>
<div class="ln" style="left:62px;top:820px"><span class="ad">Добавить условие</span></div>
<div class="ln" style="left:712px;top:798px"><span class="i" style="width:16px;margin-right:0px"><svg class="ic" width="16" height="16" viewBox="0 0 16 16" ><rect x="0" y="6" width="9.5" height="9" fill="#8c8f96"/><rect x="4.5" y="2.5" width="9.5" height="8.5" fill="#a8d6ff" stroke="#2a64a8" stroke-width="1"/></svg></span>Включить режим отладки ограничивающих прямоугольников / масок столкновений: <span class="gr">нет</span> (включая невидимые объекты: <span class="gr">да</span>, имена точек: <span class="gr">нет</span>, настраиваемые точки: <span class="gr">нет</span>)</div>
<div class="ln" style="left:711px;top:819px"><span class="ad">Добавить действие</span></div>
<div class="hd" style="left:23px;top:843px;height:108px"></div>
<div class="cd" style="left:34px;top:843px;width:672px;height:107px"></div>
<div class="sep" style="left:34px;top:950px;width:672px"></div>
<div class="ln" style="left:40px;top:844px"><span class="ad">Добавить условие</span></div>
<div class="ln" style="left:712px;top:843px"><span class="i" style="width:16px;margin-right:0px"><svg class="ic" width="16" height="16" viewBox="0 0 16 16" ><path d="M7 2.6C5 2.6 4.1 3.9 4.1 5.6c0 1.3.6 2 1 2.8.2.4.2.8 0 1.2-.4.8-1.1 1.5-1.1 2.9 0 1.8 1 3 3 3s3-1.2 3-3c0-1.4-.7-2.1-1.1-2.9-.2-.4-.2-.8 0-1.2.4-.8 1-1.5 1-2.8 0-1.7-.9-3-2.9-3z" fill="none" stroke="#f0f0f0" stroke-width="1.4"/><circle cx="7.6" cy="5.8" r=".9" fill="#e0e0e0"/><path d="M6.2 12.6l1.4-1.6" stroke="#b0b0b0" stroke-width=".9"/></svg></span>Обновить хитбоксы поля <span class="i" style="width:14px;margin:0 2px 0 1px"><svg class="ic" width="14" height="16" viewBox="0 0 14 16" ><path d="M1.2 3.9H6.5" fill="none" stroke="#3aa6d6" stroke-width="1.3" stroke-dasharray="1.3 1.2"/><path d="M6.5 3.9h.7Q8.7 3.9 8.7 5.4 8.7 7 7.2 7H2.7Q1.2 7 1.2 8.5V12.5Q1.2 14 2.7 14H3.6" fill="none" stroke="#3aa6d6" stroke-width="1.3"/><path d="M4.2 14h1.2" stroke="#3aa6d6" stroke-width="1.3"/><path d="M6.6 14.2L12.6 9.4" stroke="#2f3aa0" stroke-width="2.4" stroke-linecap="round"/></svg></span><span class="ob">PlatformField</span></div>
<div class="ln" style="left:712px;top:865px"><span class="i" style="width:16px;margin-right:0px"><svg class="ic" width="16" height="16" viewBox="0 0 16 16" ><path d="M.8 4h6.4L4 15H1.2z" fill="#bfdcf0"/><path d="M8.6 3L3.6 15.6" stroke="#0a0a0a" stroke-width="1.2"/></svg></span>Очистить отображенное изображение объекта <span class="i" style="width:14px;margin:0 2px 0 1px"><svg class="ic" width="14" height="16" viewBox="0 0 14 16" ><path d="M1.2 3.9H6.5" fill="none" stroke="#3aa6d6" stroke-width="1.3" stroke-dasharray="1.3 1.2"/><path d="M6.5 3.9h.7Q8.7 3.9 8.7 5.4 8.7 7 7.2 7H2.7Q1.2 7 1.2 8.5V12.5Q1.2 14 2.7 14H3.6" fill="none" stroke="#3aa6d6" stroke-width="1.3"/><path d="M4.2 14h1.2" stroke="#3aa6d6" stroke-width="1.3"/><path d="M6.6 14.2L12.6 9.4" stroke="#2f3aa0" stroke-width="2.4" stroke-linecap="round"/></svg></span><span class="ob">PlatformField</span></div>
<div class="ln" style="left:712px;top:887px"><span class="i" style="width:16px;margin-right:0px"><svg class="ic" width="16" height="16" viewBox="0 0 16 16" ><path d="M7 2.6C5 2.6 4.1 3.9 4.1 5.6c0 1.3.6 2 1 2.8.2.4.2.8 0 1.2-.4.8-1.1 1.5-1.1 2.9 0 1.8 1 3 3 3s3-1.2 3-3c0-1.4-.7-2.1-1.1-2.9-.2-.4-.2-.8 0-1.2.4-.8 1-1.5 1-2.8 0-1.7-.9-3-2.9-3z" fill="none" stroke="#f0f0f0" stroke-width="1.4"/><circle cx="7.6" cy="5.8" r=".9" fill="#e0e0e0"/><path d="M6.2 12.6l1.4-1.6" stroke="#b0b0b0" stroke-width=".9"/></svg></span>Нарисовать контуры поля <span class="i" style="width:14px;margin:0 2px 0 1px"><svg class="ic" width="14" height="16" viewBox="0 0 14 16" ><path d="M1.2 3.9H6.5" fill="none" stroke="#3aa6d6" stroke-width="1.3" stroke-dasharray="1.3 1.2"/><path d="M6.5 3.9h.7Q8.7 3.9 8.7 5.4 8.7 7 7.2 7H2.7Q1.2 7 1.2 8.5V12.5Q1.2 14 2.7 14H3.6" fill="none" stroke="#3aa6d6" stroke-width="1.3"/><path d="M4.2 14h1.2" stroke="#3aa6d6" stroke-width="1.3"/><path d="M6.6 14.2L12.6 9.4" stroke="#2f3aa0" stroke-width="2.4" stroke-linecap="round"/></svg></span><span class="ob">PlatformField</span></div>
<div class="ln" style="left:712px;top:909px"><span class="i" style="width:16px;margin-right:0px"><svg class="ic" width="16" height="16" viewBox="0 0 16 16" ><path d="M1.5 14.5c1-2 1.5-5 1.8-7M1.3 10.5h2.2M4.8 9.5l3.2 5M8 9.5l-3.2 5M10 14.5c.5-2 1-5 1.5-7M9.5 10h2.5" stroke="#8a8c92" stroke-width="1.2" fill="none"/></svg></span>Изменить текст объекта <span class="i" style="width:13px;margin:0 2.5px 0 1px"><svg class="ic" width="13" height="16" viewBox="0 0 13 16" ><rect x="0.5" y="3.5" width="12.5" height="12.5" fill="#3aa4dc"/><rect x="0.5" y="4" width="12.5" height="1.5" fill="#8ed0f0"/><path d="M2.5 6.3h6v1.4H6.3v6h-1.5v-6H2.5z" fill="#283c9a"/><rect x="9" y="10" width="2.2" height="3" fill="#3850b0"/></svg></span><span class="ob">Directions</span>: <span class="op">установить в</span> <span class="gx">ToString(PlatformField.Territory::Completion()) + &quot;%&quot;</span></div>
<div class="ln" style="left:711px;top:930px"><span class="ad">Добавить действие</span></div>
<div class="hd" style="left:23px;top:952px;height:44px"></div>
<div class="cd" style="left:34px;top:952px;width:672px;height:43px"></div>
<div class="sep" style="left:34px;top:995px;width:672px"></div>
<div class="ln" style="left:41px;top:953px"><span class="i" style="width:15.6px;margin-right:0px"><svg class="ic" width="15.6" height="16" viewBox="0 0 15.6 16" ><path d="M.8 15.6c1.8 0 2.6-.9 3.2-4.6l.8-4.4c.5-2.2 1.6-2.7 3-2.4" fill="none" stroke="#f2f2f2" stroke-width="1.5"/><path d="M2.3 8.6h3.8" stroke="#f2f2f2" stroke-width="1.2"/><path d="M7.2 7q-1.6 3.8 0 7.6M13.6 7q1.6 3.8 0 7.6M8.8 8.8l3.2 4.6M12 8.8L8.8 13.4" fill="none" stroke="#a8a8ac" stroke-width="1.1"/></svg></span><span class="ex">PlatformField.Territory::Completion()</span> <span class="gr">≥</span> <span class="ex">50</span></div>
<div class="ln" style="left:40px;top:974px"><span class="ad">Добавить условие</span></div>
<div class="ln" style="left:712px;top:952px"><span class="i" style="width:16px;margin-right:0px"><svg class="ic" width="16" height="16" viewBox="0 0 16 16" ><path d="M1 6.8H8.5V4.7L13 9.8H3z" fill="#45b4ea"/><path d="M3 9.8H13L8.5 15V13H1z" fill="#2b3596"/></svg></span>Изменить сцену на <span class="gr">&quot;PlatformPainter&quot;</span></div>
<div class="ln" style="left:711px;top:973px"><span class="ad">Добавить действие</span></div>
<div class="dl" style="left:33px;top:842px;width:1877px;height:1px;background:repeating-linear-gradient(90deg,#4cc0f5 0 3.5px,transparent 3.5px 5px)"></div>
<div class="dl" style="left:33px;top:950px;width:1877px;height:1px;background:repeating-linear-gradient(90deg,#4cc0f5 0 3.5px,transparent 3.5px 5px)"></div>
<div class="dl" style="left:33px;top:842px;width:1px;height:109px;background:repeating-linear-gradient(180deg,#4cc0f5 0 3.5px,transparent 3.5px 5px)"></div>
<div class="dl" style="left:1909px;top:842px;width:1px;height:109px;background:repeating-linear-gradient(180deg,#4cc0f5 0 3.5px,transparent 3.5px 5px)"></div>
<div class="dl" style="left:33px;top:951px;width:1877px;height:1px;background:repeating-linear-gradient(90deg,#4cc0f5 0 3.5px,transparent 3.5px 5px)"></div>
<div class="dl" style="left:33px;top:995px;width:1877px;height:1px;background:repeating-linear-gradient(90deg,#4cc0f5 0 3.5px,transparent 3.5px 5px)"></div>
<div class="dl" style="left:33px;top:951px;width:1px;height:45px;background:repeating-linear-gradient(180deg,#4cc0f5 0 3.5px,transparent 3.5px 5px)"></div>
<div class="dl" style="left:1909px;top:951px;width:1px;height:45px;background:repeating-linear-gradient(180deg,#4cc0f5 0 3.5px,transparent 3.5px 5px)"></div>
<div class="tl" style="left:11px;top:133px;width:1px;height:63px"></div>
<div class="tl" style="left:11px;top:212px;width:1px;height:509px"></div>
<div class="tl" style="left:11px;top:737px;width:1px;height:280px"></div>
<div class="tl" style="left:11px;top:133px;width:11px;height:1px"></div>
<div class="tl" style="left:11px;top:607px;width:11px;height:1px"></div>
<div class="tl" style="left:11px;top:674px;width:11px;height:1px"></div>
<div class="tl" style="left:11px;top:896px;width:11px;height:1px"></div>
<div class="tl" style="left:11px;top:973px;width:11px;height:1px"></div>
<div class="tl" style="left:11px;top:1016px;width:11px;height:1px"></div>
<div class="tl" style="left:19px;top:205px;width:3px;height:1px"></div>
<div class="tl" style="left:19px;top:730px;width:3px;height:1px"></div>
<div class="tl" style="left:33px;top:222px;width:1px;height:298px"></div>
<div class="tl" style="left:33px;top:244px;width:11px;height:1px"></div>
<div class="tl" style="left:33px;top:288px;width:11px;height:1px"></div>
<div class="tl" style="left:33px;top:333px;width:11px;height:1px"></div>
<div class="tl" style="left:33px;top:409px;width:11px;height:1px"></div>
<div class="tl" style="left:33px;top:519px;width:11px;height:1px"></div>
<div class="tl" style="left:33px;top:752px;width:1px;height:69px"></div>
<div class="tl" style="left:33px;top:775px;width:11px;height:1px"></div>
<div class="tl" style="left:33px;top:820px;width:11px;height:1px"></div>
<svg class="chev" style="left:6px;top:200px" width="10" height="8" viewBox="0 0 10 8"><path d="M1.5 2.2L5 5.6 8.5 2.2" fill="none" stroke="#e8e8e8" stroke-width="1.5"/></svg>
<svg class="chev" style="left:6px;top:725px" width="10" height="8" viewBox="0 0 10 8"><path d="M1.5 2.2L5 5.6 8.5 2.2" fill="none" stroke="#e8e8e8" stroke-width="1.5"/></svg>
<div class="ln" style="left:30px;top:1003px"><span class="ad">Добавить новое событие</span></div>
<div class="ln" style="right:8px;top:1003px"><span class="ad">Добавить...</span></div>
</body></html>
